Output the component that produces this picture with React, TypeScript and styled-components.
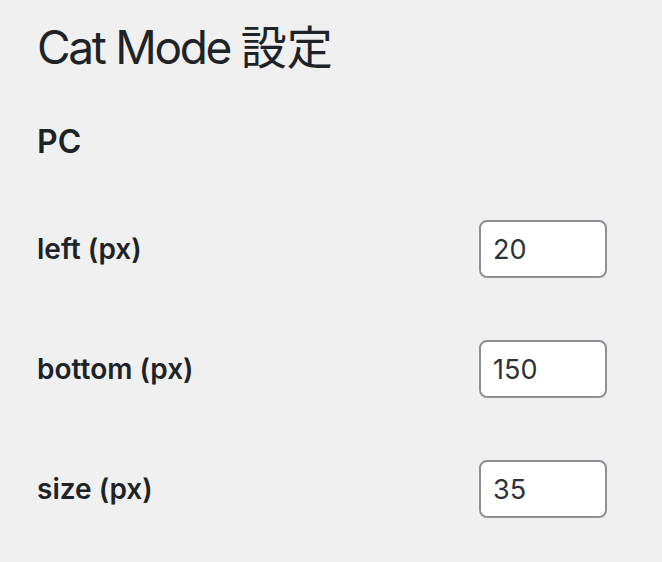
import React from "react";
import styled, { createGlobalStyle } from "styled-components";

const GlobalStyle = createGlobalStyle`
  html, body {
    margin: 0;
    padding: 0;
    background: #f0f0f1;
  }
  body {
    font-family: Inter, "Noto Sans CJK JP", sans-serif;
    color: #1d2327;
  }
`;

type Field = {
  label: string;
  value: string;
};

const fields: Field[] = [
  { label: "left (px)", value: "20" },
  { label: "bottom (px)", value: "150" },
  { label: "size (px)", value: "35" },
];

export default function App() {
  return (
    <>
      <GlobalStyle />
      <Wrapper>
        <Title>
          Cat Mode <Kanji>設定</Kanji>
        </Title>
        <Section>PC</Section>
        <Form>
          {fields.map((f) => (
            <Row key={f.label}>
              <Label htmlFor={f.label}>{f.label}</Label>
              <Input id={f.label} type="text" defaultValue={f.value} />
            </Row>
          ))}
        </Form>
      </Wrapper>
    </>
  );
}

const Wrapper = styled.div`
  padding: 17px 0 0 37px;
`;

const Title = styled.h1`
  margin: 0;
  font-size: 46px;
  font-weight: 400;
  line-height: 60px;
  letter-spacing: -2.3px;
`;

const Kanji = styled.span`
  letter-spacing: 0;
`;

const Section = styled.h2`
  margin: 45px 0 0;
  font-size: 32px;
  font-weight: 600;
  line-height: 40px;
`;

const Form = styled.div`
  margin-top: 27px;
  display: flex;
  flex-direction: column;
`;

const Row = styled.div`
  height: 120px;
  display: flex;
  align-items: center;
`;

const Label = styled.label`
  width: 442px;
  flex-shrink: 0;
  font-size: 28px;
  font-weight: 600;
`;

const Input = styled.input`
  box-sizing: border-box;
  width: 128px;
  height: 58px;
  padding: 0 12px;
  border: 2px solid #8c8f94;
  border-radius: 8px;
  background: #fff;
  font-family: Inter, sans-serif;
  font-size: 27px;
  color: #2c3338;
  outline: none;
`;
